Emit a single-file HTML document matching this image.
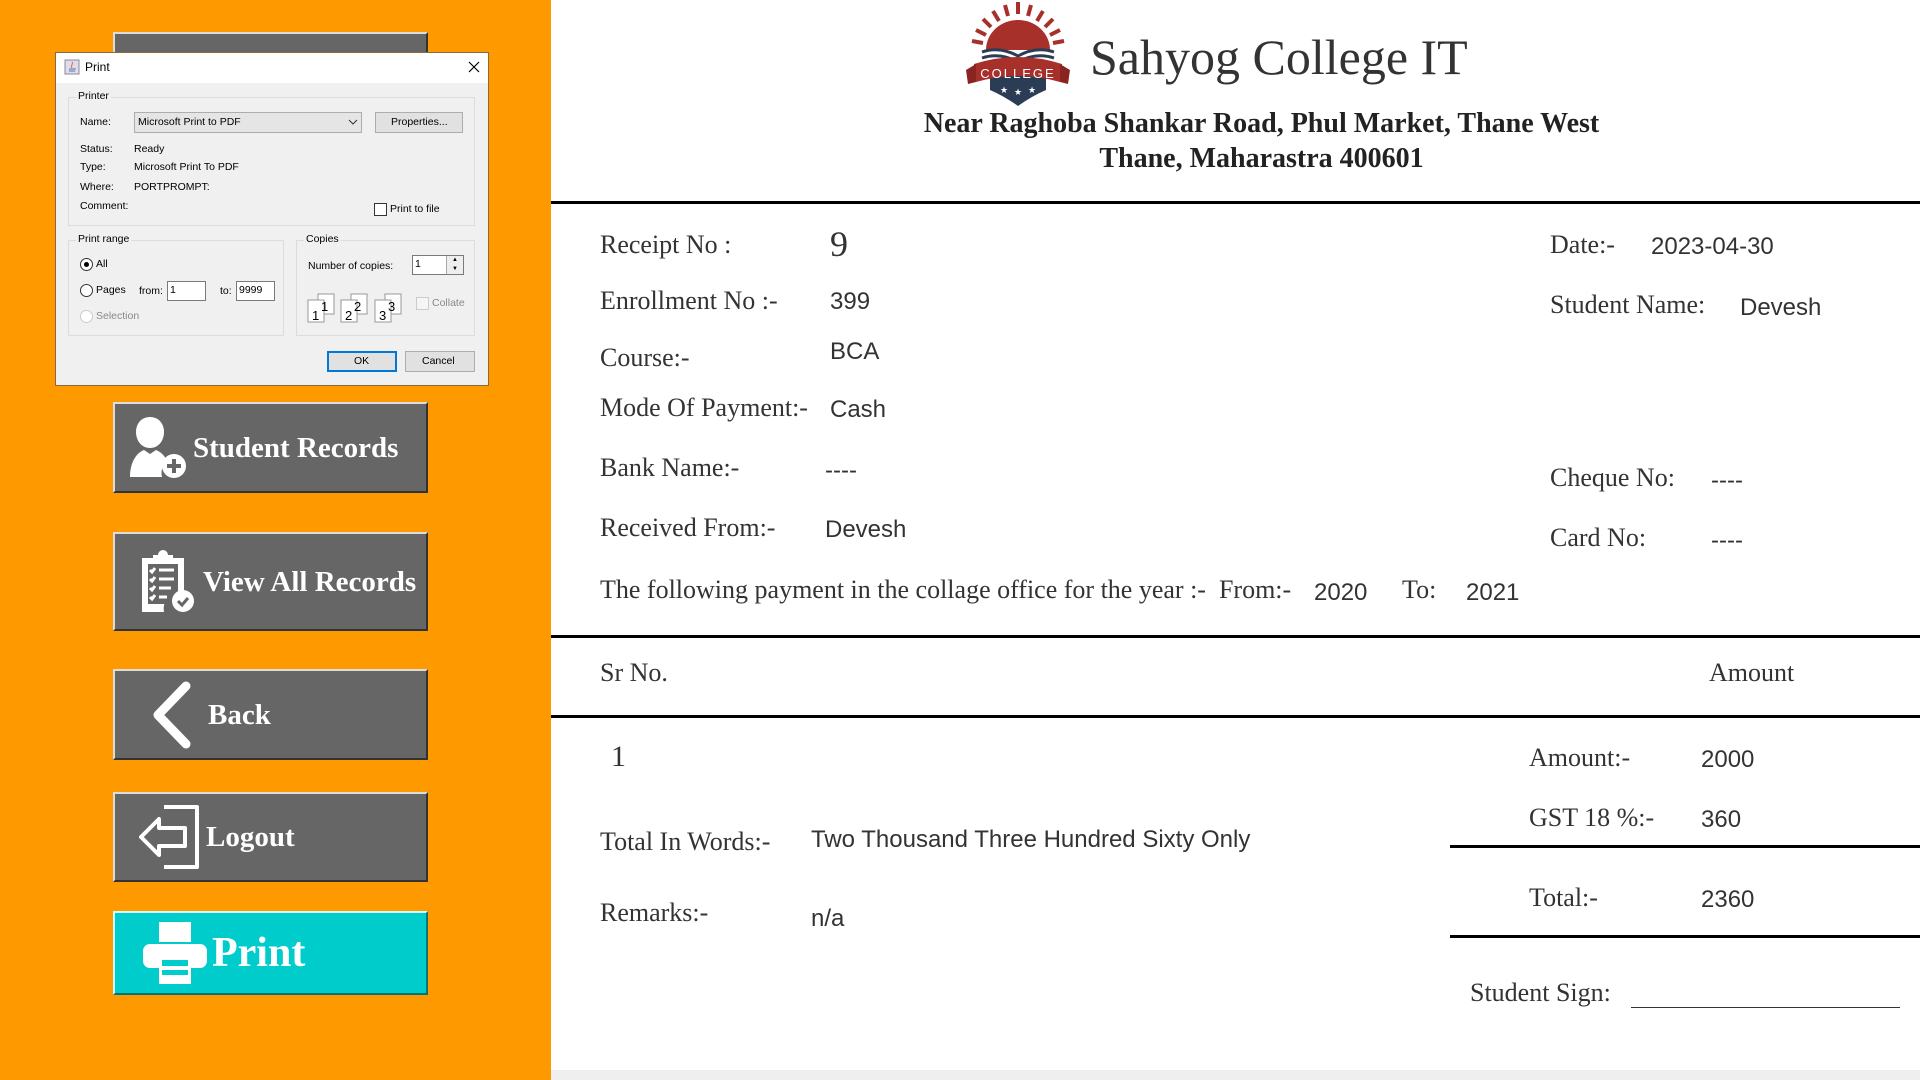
<!DOCTYPE html>
<html><head><meta charset="utf-8"><style>
*{margin:0;padding:0;box-sizing:border-box}
body{width:1920px;height:1080px;overflow:hidden;position:relative;background:#fff;font-family:"Liberation Serif",serif;color:#333}
.a{position:absolute;white-space:nowrap}
.l{position:absolute;white-space:nowrap;font-family:"Liberation Serif",serif;font-size:26px;line-height:30px;color:#333}
.v{position:absolute;white-space:nowrap;font-family:"Liberation Sans",sans-serif;font-size:24px;line-height:30px;color:#333}
.btn{position:absolute;left:113px;width:315px;background:#666;border-top:2px solid #ddd;border-left:2px solid #ddd;border-right:2px solid #333;border-bottom:2px solid #333}
.bt{position:absolute;font-family:"Liberation Serif",serif;font-weight:bold;color:#fff;font-size:29px;line-height:30px;white-space:nowrap}
.hl{position:absolute;height:3px;background:#000}
.d{font-family:"Liberation Sans",sans-serif;font-size:10.5px;color:#000;position:absolute;white-space:nowrap;line-height:13px}
.box{position:absolute;border:1px solid #dcdcdc}
.in{position:absolute;background:#fff;border:1px solid #7a7a7a}
.rb{position:absolute;width:13px;height:13px;border:1px solid #333;border-radius:50%;background:#fff}
.pb{position:absolute;background:#e1e1e1;border:1px solid #adadad}
</style></head><body>
<div class="a" style="left:0;top:0;width:551px;height:1080px;background:#ff9900"></div>
<div class="a" style="left:551px;top:1070px;width:1369px;height:10px;background:#efefef"></div>

<div class="btn" style="top:32px;height:40px"></div>
<div class="btn" style="top:402px;height:91px"></div>
<svg class="a" style="left:128px;top:415px" width="62" height="66" viewBox="0 0 62 66"><path d="M22 2c9 0 14 7 14 15s-5 16-14 16S8 25 8 17 13 2 22 2z" fill="#fff"/><path d="M2 62c0-14 6-24 14-27l6 4 6-4c5 2 9 6 11 11a16 16 0 0 0-5 16z" fill="#fff"/><circle cx="46" cy="51" r="12" fill="#fff"/><path d="M46 44v14M39 51h14" stroke="#666" stroke-width="4"/></svg>
<div class="bt" style="left:193px;top:433px">Student Records</div>

<div class="btn" style="top:532px;height:99px"></div>
<svg class="a" style="left:138px;top:548px" width="58" height="66" viewBox="0 0 58 66"><path d="M4 10h11v-3h5a5 5 0 0 1 10 0h5v3h11v34a17 17 0 0 0-20 20H4z" fill="#fff"/><rect x="10" y="16" width="30" height="40" fill="#666"/><g stroke="#fff" stroke-width="3" fill="none"><path d="M12 22l2 2 3-4M12 31l2 2 3-4M12 40l2 2 3-4M12 49l2 2 3-4M21 22h15M21 31h15M21 40h12M21 49h8"/></g><circle cx="45" cy="53" r="11" fill="#fff"/><path d="M40 53l4 4 6-7" stroke="#666" stroke-width="3" fill="none"/></svg>
<div class="bt" style="left:203px;top:567px">View All Records</div>

<div class="btn" style="top:669px;height:91px"></div>
<svg class="a" style="left:150px;top:680px" width="44" height="70" viewBox="0 0 44 70"><path d="M36 6L8 35l28 29" stroke="#fff" stroke-width="9" stroke-linecap="round" stroke-linejoin="round" fill="none"/></svg>
<div class="bt" style="left:208px;top:700px">Back</div>

<div class="btn" style="top:792px;height:90px"></div>
<svg class="a" style="left:137px;top:804px" width="64" height="66" viewBox="0 0 64 66"><path d="M27 3h33v60H27" stroke="#fff" stroke-width="4" fill="none" stroke-linejoin="round"/><path d="M4 33l18-18v9h26v18H22v9z" stroke="#fff" stroke-width="4" fill="none" stroke-linejoin="round"/></svg>
<div class="bt" style="left:206px;top:822px">Logout</div>

<div class="a" style="left:113px;top:911px;width:315px;height:84px;background:#00cccc;border-top:2px solid #cff;border-left:2px solid #cff;border-right:2px solid #077;border-bottom:2px solid #077"></div>
<svg class="a" style="left:143px;top:922px" width="66" height="62" viewBox="0 0 66 62"><rect x="16" y="0" width="32" height="20" fill="#fff"/><rect x="0" y="22" width="64" height="24" rx="7" fill="#fff"/><rect x="16" y="34" width="32" height="28" fill="#fff"/><rect x="19" y="38" width="26" height="6" fill="#00cccc"/><rect x="19" y="48" width="26" height="5" fill="#00cccc"/></svg>
<div class="bt" style="left:212px;top:930px;font-size:42px;line-height:46px">Print</div>

<div class="a" style="left:55px;top:52px;width:434px;height:334px;background:#f0f0f0;border:1px solid #8a6a3a"></div>
<div class="a" style="left:56px;top:53px;width:432px;height:30px;background:#fff"></div>
<svg class="a" style="left:64px;top:59px" width="16" height="16"><rect x="1" y="1" width="14" height="14" fill="#dde" stroke="#889"/><path d="M5 10h7M5 12h6" stroke="#57a"/><path d="M8 3c2 2-2 3 0 6" stroke="#e63" fill="none"/></svg>
<div class="d" style="left:85px;top:61px;font-size:12px">Print</div>
<svg class="a" style="left:468px;top:61px" width="12" height="12"><path d="M1 1l10 10M11 1L1 11" stroke="#000" stroke-width="1.2"/></svg>
<div class="box" style="left:68px;top:97px;width:407px;height:129px"></div>
<div class="d" style="left:76px;top:90px;background:#f0f0f0;padding:0 2px">Printer</div>
<div class="d" style="left:80px;top:116px">Name:</div>
<div class="a" style="left:134px;top:112px;width:228px;height:21px;background:#e5e5e5;border:1px solid #adadad"></div>
<div class="d" style="left:138px;top:116px">Microsoft Print to PDF</div>
<svg class="a" style="left:348px;top:118px" width="10" height="8"><path d="M1 2l4 4 4-4" stroke="#333" fill="none"/></svg>
<div class="pb" style="left:375px;top:112px;width:88px;height:21px"></div>
<div class="d" style="left:391px;top:116px">Properties...</div>
<div class="d" style="left:80px;top:143px">Status:</div><div class="d" style="left:134px;top:143px">Ready</div>
<div class="d" style="left:80px;top:161px">Type:</div><div class="d" style="left:134px;top:161px">Microsoft Print To PDF</div>
<div class="d" style="left:80px;top:181px">Where:</div><div class="d" style="left:134px;top:181px">PORTPROMPT:</div>
<div class="d" style="left:80px;top:200px">Comment:</div>
<div class="a" style="left:374px;top:203px;width:13px;height:13px;background:#fff;border:1px solid #333"></div>
<div class="d" style="left:390px;top:203px">Print to file</div>

<div class="box" style="left:68px;top:240px;width:216px;height:96px"></div>
<div class="d" style="left:76px;top:233px;background:#f0f0f0;padding:0 2px">Print range</div>
<div class="rb" style="left:80px;top:258px"></div><div class="a" style="left:84px;top:262px;width:5px;height:5px;border-radius:50%;background:#000"></div>
<div class="d" style="left:96px;top:258px">All</div>
<div class="rb" style="left:80px;top:284px"></div>
<div class="d" style="left:96px;top:284px">Pages</div>
<div class="d" style="left:139px;top:285px">from:</div>
<div class="in" style="left:167px;top:281px;width:39px;height:20px"></div><div class="d" style="left:170px;top:284px">1</div>
<div class="d" style="left:220px;top:285px">to:</div>
<div class="in" style="left:236px;top:281px;width:39px;height:20px"></div><div class="d" style="left:239px;top:284px">9999</div>
<div class="rb" style="left:80px;top:310px;border-color:#ccc"></div>
<div class="d" style="left:96px;top:310px;color:#888">Selection</div>

<div class="box" style="left:296px;top:240px;width:179px;height:96px"></div>
<div class="d" style="left:304px;top:233px;background:#f0f0f0;padding:0 2px">Copies</div>
<div class="d" style="left:308px;top:260px">Number of copies:</div>
<div class="in" style="left:412px;top:255px;width:52px;height:20px"></div><div class="d" style="left:415px;top:258px">1</div>
<div class="a" style="left:446px;top:256px;width:17px;height:18px;background:#eee;border-left:1px solid #aaa;font-size:6px;line-height:9px;text-align:center;color:#000">▲<br>▼</div>
<svg class="a" style="left:306px;top:292px" width="100" height="32" font-family="Liberation Sans" font-size="13"><g fill="#fff" stroke="#999"><rect x="12" y="2" width="16" height="20"/><rect x="2" y="8" width="16" height="22"/><rect x="45" y="2" width="16" height="20"/><rect x="35" y="8" width="16" height="22"/><rect x="79" y="2" width="16" height="20"/><rect x="69" y="8" width="16" height="22"/></g><text x="15" y="19">1</text><text x="6" y="28">1</text><text x="48" y="19">2</text><text x="39" y="28">2</text><text x="82" y="19">3</text><text x="73" y="28">3</text></svg>
<div class="a" style="left:416px;top:297px;width:13px;height:13px;border:1px solid #ccc;background:#f5f5f5"></div>
<div class="d" style="left:432px;top:297px;color:#888">Collate</div>
<div class="a" style="left:327px;top:351px;width:70px;height:21px;background:#e1e1e1;border:2px solid #0078d7"></div>
<div class="d" style="left:354px;top:355px">OK</div>
<div class="pb" style="left:405px;top:351px;width:70px;height:21px"></div>
<div class="d" style="left:422px;top:355px">Cancel</div>

<svg class="a" style="left:960px;top:2px" width="120" height="106" viewBox="0 0 120 106">
<g stroke="#a8302a" stroke-width="4">
<path d="M58 0v12M45 3l3 11M71 3l-3 11M33 9l6 10M83 9l-6 10M23 17l8 8M93 17l-8 8M16 28l10 5M100 28l-10 5M12 39l11 2M104 39l-11 2"/></g>
<path d="M26 48a32 30 0 0 1 64 0z" fill="#a8302a"/>
<g stroke="#2b3d55" stroke-width="3" fill="none"><path d="M22 50q18-6 36 4q18-10 36-4M22 56q18-6 36 4q18-10 36-4M22 62q18-6 36 4q18-10 36-4"/></g>
<path d="M30 76l28-6 28 6v12q-14 6-28 16q-14-10-28-16z" fill="#2b3d55"/>
<path d="M14 62q44-14 88 0l-2 18q-42-12-84 0z" fill="#a8302a"/>
<path d="M6 68l10-6 0 18-8 2zM110 68l-10-6 0 18 8 2z" fill="#8a2420"/>
<text x="58" y="76" text-anchor="middle" font-family="Liberation Sans" font-size="13" fill="#fff" letter-spacing="2">COLLEGE</text>
<g fill="#fff" font-size="9" font-family="DejaVu Sans" text-anchor="middle"><text x="44" y="91">★</text><text x="58" y="93">★</text><text x="72" y="91">★</text></g>
</svg>
<div class="a" style="left:1090px;top:28px;font-size:50px;line-height:58px;color:#333">Sahyog College IT</div>
<div class="a" style="left:551px;width:1369px;top:106px;text-align:center;font-size:28px;line-height:35px;font-weight:bold;color:#222;padding-left:52px">Near Raghoba Shankar Road, Phul Market, Thane West<br>Thane, Maharastra 400601</div>
<div class="hl" style="left:551px;width:1369px;top:201px"></div>

<div class="l" style="left:600px;top:230px">Receipt No :</div>
<div class="l" style="left:830px;top:224px;font-size:36px;line-height:40px">9</div>
<div class="l" style="left:600px;top:286px">Enrollment No :-</div><div class="v" style="left:830px;top:287px">399</div>
<div class="l" style="left:600px;top:343px">Course:-</div><div class="v" style="left:830px;top:337px">BCA</div>
<div class="l" style="left:600px;top:393px">Mode Of Payment:-</div><div class="v" style="left:830px;top:395px">Cash</div>
<div class="l" style="left:600px;top:453px">Bank Name:-</div><div class="v" style="left:825px;top:456px">----</div>
<div class="l" style="left:600px;top:513px">Received From:-</div><div class="v" style="left:825px;top:515px">Devesh</div>
<div class="l" style="left:600px;top:575px">The following payment in the collage office for the year :-&nbsp; From:-</div>
<div class="v" style="left:1314px;top:578px">2020</div>
<div class="l" style="left:1402px;top:575px">To:</div><div class="v" style="left:1466px;top:578px">2021</div>
<div class="l" style="left:1550px;top:230px">Date:-</div><div class="v" style="left:1651px;top:232px">2023-04-30</div>
<div class="l" style="left:1550px;top:290px">Student Name:</div><div class="v" style="left:1740px;top:293px">Devesh</div>
<div class="l" style="left:1550px;top:463px">Cheque No:</div><div class="v" style="left:1711px;top:466px">----</div>
<div class="l" style="left:1550px;top:523px">Card No:</div><div class="v" style="left:1711px;top:526px">----</div>

<div class="hl" style="left:551px;width:1369px;top:635px"></div>
<div class="l" style="left:600px;top:658px">Sr No.</div>
<div class="l" style="left:1709px;top:658px">Amount</div>
<div class="hl" style="left:551px;width:1369px;top:715px"></div>

<div class="l" style="left:611px;top:741px;font-size:30px;line-height:32px">1</div>
<div class="l" style="left:1529px;top:743px">Amount:-</div><div class="v" style="left:1701px;top:745px">2000</div>
<div class="l" style="left:1529px;top:803px">GST 18 %:-</div><div class="v" style="left:1701px;top:805px">360</div>
<div class="hl" style="left:1450px;width:470px;top:845px"></div>
<div class="l" style="left:1529px;top:883px">Total:-</div><div class="v" style="left:1701px;top:885px">2360</div>
<div class="hl" style="left:1450px;width:470px;top:935px"></div>
<div class="l" style="left:600px;top:827px">Total In Words:-</div><div class="v" style="left:811px;top:825px">Two Thousand Three Hundred Sixty Only</div>
<div class="l" style="left:600px;top:898px">Remarks:-</div><div class="v" style="left:811px;top:904px">n/a</div>
<div class="l" style="left:1470px;top:978px">Student Sign:</div>
<div class="a" style="left:1631px;top:1007px;width:269px;height:1px;background:#333"></div>
</body></html>
